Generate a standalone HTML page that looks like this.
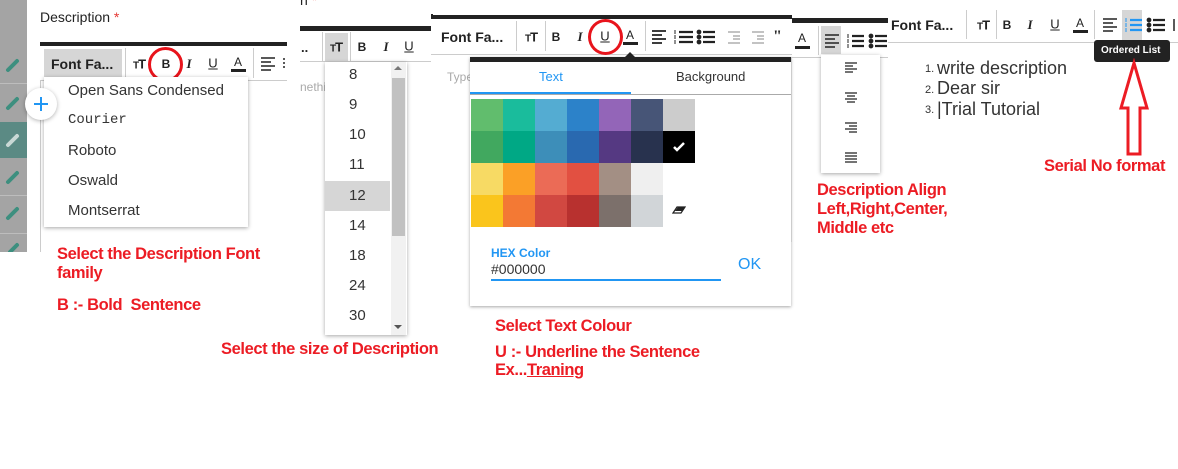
<!DOCTYPE html>
<html><head><meta charset="utf-8"><style>
*{margin:0;padding:0;box-sizing:border-box}
body{width:1178px;height:469px;background:#fff;position:relative;overflow:hidden;font-family:"Liberation Sans",Arial,sans-serif;color:#222}
.a{position:absolute}
.t{position:absolute;white-space:nowrap}
.red{color:#ec1c24;font-weight:bold;font-size:16.5px;line-height:19px;letter-spacing:-0.4px;position:absolute;white-space:nowrap}
.bar{position:absolute;background:#222}
.hl{position:absolute;height:1px;background:#ccc}
.sep{position:absolute;width:1px;background:#ccc}
.ic{position:absolute;font-weight:bold;font-size:13px;color:#222;transform:translate(-50%,-50%)}
.tt{position:absolute;font-weight:bold;font-size:13px;transform:translate(-50%,-50%);letter-spacing:-1px}
.tt small{font-size:10px}
.sw{position:absolute;width:32px;height:32px}
.item{position:absolute;left:68px;font-size:15px;color:#333}
.sz{position:absolute;left:349px;font-size:15px;color:#333}
</style></head><body>

<!-- left gray strip -->
<div class="a" style="left:0;top:0;width:27px;height:252px;background:#a4a4a4"></div>
<div class="a" style="left:0;top:122px;width:27px;height:36px;background:#5b8a84"></div>
<div class="hl" style="left:0;top:83px;width:27px;background:#bdbdbd"></div>
<div class="hl" style="left:0;top:195px;width:27px;background:#bdbdbd"></div>
<div class="hl" style="left:0;top:233px;width:27px;background:#bdbdbd"></div>
<svg class="a" style="left:0;top:0" width="27" height="252">
<g stroke-linecap="round" stroke-width="4">
<path d="M8 70 L17 61" stroke="#3d8f7f"/><path d="M8 108 L17 99" stroke="#3d8f7f"/>
<path d="M8 145 L17 136" stroke="#c9d8d5"/><path d="M8 182 L17 173" stroke="#3d8f7f"/>
<path d="M8 218 L17 209" stroke="#3d8f7f"/><path d="M10 252 L17 245" stroke="#3d8f7f"/>
</g></svg>
<div class="a" style="left:40px;top:80px;width:1px;height:172px;background:#ccc"></div>

<!-- panel 1 -->
<div class="t" style="left:40px;top:9px;font-size:14px;color:#222">Description <span style="color:#e53935">*</span></div>
<div class="bar" style="left:40px;top:42px;width:247px;height:4px"></div>
<div class="hl" style="left:40px;top:80px;width:247px"></div>
<div class="a" style="left:44px;top:49px;width:78px;height:28px;background:#d6d6d6"></div>
<div class="t" style="left:51px;top:56px;font-size:14px;font-weight:bold;color:#222">Font Fa...</div>
<div class="sep" style="left:125px;top:48px;height:30px"></div>
<div class="tt" style="left:139px;top:64px"><small>T</small>T</div>
<div class="ic" style="left:166px;top:64px;font-size:12px">B</div>
<div class="ic" style="left:189px;top:64px;font-style:italic;font-family:'Liberation Serif'">I</div>
<div class="ic" style="left:213px;top:63px;font-weight:normal;text-decoration:underline">U</div>
<div class="ic" style="left:238px;top:62px;font-weight:normal;font-size:12px">A</div>
<div class="a" style="left:231px;top:69px;width:15px;height:3px;background:#222"></div>
<div class="sep" style="left:253px;top:48px;height:30px"></div>
<svg class="a" style="left:260px;top:56px" width="30" height="16"><g stroke="#222" stroke-width="1.5"><path d="M1 2h14M1 6h10M1 10h14M1 14h10"/><path d="M24 2v12" stroke-dasharray="2 2"/></g></svg>
<div class="a" style="left:148px;top:47px;width:35px;height:35px;border:3px solid #e8141c;border-radius:50%"></div>
<!-- font dropdown -->
<div class="a" style="left:44px;top:77px;width:204px;height:150px;background:#fff;box-shadow:0 1px 4px rgba(0,0,0,.35)"></div>
<div class="item" style="top:82px">Open Sans Condensed</div>
<div class="item" style="top:112px;font-family:'Liberation Mono';font-size:14px">Courier</div>
<div class="item" style="top:142px">Roboto</div>
<div class="item" style="top:172px">Oswald</div>
<div class="item" style="top:202px">Montserrat</div>
<div class="a" style="left:25px;top:88px;width:32px;height:32px;border-radius:50%;background:#fff;box-shadow:0 1px 4px rgba(0,0,0,.3)"></div>
<div class="a" style="left:34px;top:103px;width:14px;height:2px;background:#2196f3"></div>
<div class="a" style="left:40px;top:97px;width:2px;height:14px;background:#2196f3"></div>

<!-- panel 2 -->
<div class="t" style="left:300px;top:-8px;font-size:14px">n <span style="color:#e53935">*</span></div>
<div class="bar" style="left:300px;top:26px;width:131px;height:5px"></div>
<div class="bar" style="left:431px;top:14px;width:2px;height:5px"></div>
<div class="hl" style="left:300px;top:61px;width:131px"></div>
<div class="t" style="left:301px;top:40px;font-weight:bold;font-size:13px">..</div>
<div class="sep" style="left:322px;top:32px;height:29px"></div>
<div class="a" style="left:325px;top:33px;width:23px;height:28px;background:#d6d6d6"></div>
<div class="tt" style="left:336px;top:47px"><small>T</small>T</div>
<div class="sep" style="left:350px;top:32px;height:29px"></div>
<div class="ic" style="left:362px;top:47px;font-size:12px">B</div>
<div class="ic" style="left:386px;top:47px;font-style:italic;font-family:'Liberation Serif'">I</div>
<div class="ic" style="left:409px;top:46px;font-weight:normal;text-decoration:underline">U</div>
<div class="t" style="left:300px;top:80px;font-size:12px;color:#aaa">nethi</div>
<div class="t" style="left:447px;top:70px;font-size:12px;color:#aaa">Type</div>
<!-- size dropdown -->
<div class="a" style="left:325px;top:62px;width:82px;height:273px;background:#fff;box-shadow:0 1px 4px rgba(0,0,0,.35)"></div>
<div class="a" style="left:325px;top:181px;width:65px;height:30px;background:#d6d6d6"></div>
<div class="a" style="left:391px;top:62px;width:15px;height:273px;background:#f1f1f1"></div>
<div class="a" style="left:392px;top:78px;width:13px;height:158px;background:#c1c1c1"></div>
<div class="a" style="left:394px;top:66px;border:4px solid transparent;border-bottom:4px solid #777;border-top:0"></div>
<div class="a" style="left:394px;top:325px;border:4px solid transparent;border-top:4px solid #555;border-bottom:0"></div>
<div class="sz" style="top:66px">8</div><div class="sz" style="top:96px">9</div>
<div class="sz" style="top:126px">10</div><div class="sz" style="top:156px">11</div>
<div class="sz" style="top:187px">12</div><div class="sz" style="top:217px">14</div>
<div class="sz" style="top:247px">18</div><div class="sz" style="top:277px">24</div>
<div class="sz" style="top:307px">30</div>

<!-- panel 3 -->
<div class="a" style="left:431px;top:19px;width:361px;height:36px;background:#fff"></div>
<div class="bar" style="left:431px;top:15px;width:361px;height:4px"></div>
<div class="hl" style="left:431px;top:54px;width:361px"></div>
<div class="t" style="left:441px;top:29px;font-size:14px;font-weight:bold">Font Fa...</div>
<div class="sep" style="left:516px;top:21px;height:30px"></div>
<div class="tt" style="left:531px;top:37px"><small>T</small>T</div>
<div class="sep" style="left:545px;top:21px;height:30px"></div>
<div class="ic" style="left:556px;top:37px;font-size:12px">B</div>
<div class="ic" style="left:580px;top:37px;font-style:italic;font-family:'Liberation Serif'">I</div>
<div class="ic" style="left:605px;top:36px;font-weight:normal;text-decoration:underline">U</div>
<div class="ic" style="left:630px;top:35px;font-weight:normal;font-size:12px">A</div>
<div class="a" style="left:623px;top:42px;width:15px;height:3px;background:#222"></div>
<div class="sep" style="left:645px;top:21px;height:30px"></div>
<svg class="a" style="left:650px;top:29px" width="140" height="16"><g stroke="#222" stroke-width="1.8" fill="#222">
<path d="M2 2h14M2 6h10M2 10h14M2 14h10" fill="none"/>
<path d="M29 3h14M29 8h14M29 13h14" fill="none" stroke-width="2.2"/><path d="M25 1v4M25 6v4M25 11v4" stroke-width="1"/>
<circle cx="49" cy="3" r="1.5"/><circle cx="49" cy="8" r="1.5"/><circle cx="49" cy="13" r="1.5"/><path d="M53 3h12M53 8h12M53 13h12" fill="none" stroke-width="2.2"/>
<g stroke="#bbb" fill="none"><path d="M78 3h12M83 7h7M83 10h7M78 14h12"/><path d="M102 3h12M107 7h7M107 10h7M102 14h12"/></g>
</g></svg>
<div class="t" style="left:773px;top:28px;font-size:16px;font-weight:bold;font-family:'Liberation Serif'">"</div>
<div class="a" style="left:588px;top:19px;width:35px;height:36px;border:3px solid #e8141c;border-radius:50%"></div>
<!-- color popup -->
<div class="a" style="left:470px;top:57px;width:321px;height:249px;background:#fff;box-shadow:0 1px 3px rgba(0,0,0,.35)"></div>
<div class="a" style="left:625px;top:52px;border:5px solid transparent;border-bottom:5px solid #222;border-top:0"></div>
<div class="bar" style="left:470px;top:57px;width:321px;height:5px"></div>
<div class="t" style="left:539px;top:69px;font-size:13px;color:#2196f3">Text</div>
<div class="t" style="left:676px;top:69px;font-size:13px;color:#333">Background</div>
<div class="a" style="left:470px;top:92px;width:161px;height:2px;background:#2196f3"></div>
<div class="hl" style="left:470px;top:94px;width:321px;background:#aaa"></div>
<div class="sw" style="left:471px;top:99px;background:#61bd6d"></div><div class="sw" style="left:503px;top:99px;background:#1abc9c"></div><div class="sw" style="left:535px;top:99px;background:#54acd2"></div><div class="sw" style="left:567px;top:99px;background:#2c82c9"></div><div class="sw" style="left:599px;top:99px;background:#9365b8"></div><div class="sw" style="left:631px;top:99px;background:#475577"></div><div class="sw" style="left:663px;top:99px;background:#cccccc"></div>
<div class="sw" style="left:471px;top:131px;background:#41a85f"></div><div class="sw" style="left:503px;top:131px;background:#00a885"></div><div class="sw" style="left:535px;top:131px;background:#3d8eb9"></div><div class="sw" style="left:567px;top:131px;background:#2969b0"></div><div class="sw" style="left:599px;top:131px;background:#553982"></div><div class="sw" style="left:631px;top:131px;background:#28324e"></div><div class="sw" style="left:663px;top:131px;background:#000"></div>
<div class="sw" style="left:471px;top:163px;background:#f7da64"></div><div class="sw" style="left:503px;top:163px;background:#fba026"></div><div class="sw" style="left:535px;top:163px;background:#eb6b56"></div><div class="sw" style="left:567px;top:163px;background:#e25041"></div><div class="sw" style="left:599px;top:163px;background:#a38f84"></div><div class="sw" style="left:631px;top:163px;background:#efefef"></div>
<div class="sw" style="left:471px;top:195px;background:#fac51c"></div><div class="sw" style="left:503px;top:195px;background:#f37934"></div><div class="sw" style="left:535px;top:195px;background:#d14841"></div><div class="sw" style="left:567px;top:195px;background:#b8312f"></div><div class="sw" style="left:599px;top:195px;background:#7c706b"></div><div class="sw" style="left:631px;top:195px;background:#d1d5d8"></div>
<svg class="a" style="left:671px;top:139px" width="16" height="16"><path d="M3 8l3 3 7-7" stroke="#fff" stroke-width="2.5" fill="none"/></svg>
<svg class="a" style="left:672px;top:205px" width="14" height="10"><path d="M1 8l4-6h8l-4 6z" fill="#fff" stroke="#222" stroke-width="1.2"/><path d="M3 6l3-4h7l-3 4z" fill="#222"/></svg>
<div class="t" style="left:491px;top:246px;font-size:12px;font-weight:bold;color:#2196f3">HEX Color</div>
<div class="t" style="left:491px;top:261px;font-size:14px;color:#333">#000000</div>
<div class="a" style="left:491px;top:279px;width:230px;height:2px;background:#2196f3"></div>
<div class="t" style="left:738px;top:256px;font-size:16px;color:#2196f3">OK</div>

<!-- panel 4 -->
<div class="a" style="left:791px;top:57px;width:1px;height:185px;background:#ccc"></div>
<div class="bar" style="left:792px;top:18px;width:96px;height:5px"></div>
<div class="hl" style="left:792px;top:57px;width:96px"></div>
<div class="ic" style="left:802px;top:38px;font-weight:normal;font-size:12px">A</div>
<div class="a" style="left:795px;top:46px;width:15px;height:3px;background:#222"></div>
<div class="sep" style="left:818px;top:26px;height:29px"></div>
<div class="a" style="left:821px;top:26px;width:20px;height:28px;background:#d6d6d6"></div>
<svg class="a" style="left:823px;top:33px" width="66" height="16"><g stroke="#222" stroke-width="1.8" fill="#222">
<path d="M2 2h14M2 6h10M2 10h14M2 14h10" fill="none" stroke-width="1.5"/>
<path d="M29 3h12M29 8h12M29 13h12" fill="none" stroke-width="2.2"/><path d="M25 1v4M25 6v4M25 11v4" stroke-width="1"/>
<circle cx="48" cy="3" r="1.5"/><circle cx="48" cy="8" r="1.5"/><circle cx="48" cy="13" r="1.5"/><path d="M52 3h12M52 8h12M52 13h12" fill="none" stroke-width="2.2"/>
</g></svg>
<div class="a" style="left:821px;top:55px;width:59px;height:118px;background:#fff;box-shadow:0 1px 4px rgba(0,0,0,.35)"></div>
<svg class="a" style="left:844px;top:62px" width="14" height="104"><g stroke="#222" stroke-width="1.3" fill="none">
<path d="M1 1h12M1 4h8M1 7h12M1 10h8"/>
<path d="M1 31h12M3 34h8M1 37h12M3 40h8"/>
<path d="M1 61h12M5 64h8M1 67h12M5 70h8"/>
<path d="M1 91h12M1 94h12M1 97h12M1 100h12"/></g></svg>
<div class="red" style="left:817px;top:181px">Description Align</div>
<div class="red" style="left:817px;top:200px">Left,Right,Center,</div>
<div class="red" style="left:817px;top:219px">Middle etc</div>

<!-- panel 5 -->
<div class="hl" style="left:888px;top:42px;width:290px"></div>
<div class="t" style="left:891px;top:17px;font-size:14px;font-weight:bold">Font Fa...</div>
<div class="sep" style="left:966px;top:10px;height:29px"></div>
<div class="tt" style="left:983px;top:25px"><small>T</small>T</div>
<div class="sep" style="left:996px;top:10px;height:29px"></div>
<div class="ic" style="left:1007px;top:25px;font-size:12px">B</div>
<div class="ic" style="left:1030px;top:25px;font-style:italic;font-family:'Liberation Serif'">I</div>
<div class="ic" style="left:1055px;top:24px;font-weight:normal;text-decoration:underline">U</div>
<div class="ic" style="left:1080px;top:23px;font-weight:normal;font-size:12px">A</div>
<div class="a" style="left:1073px;top:30px;width:15px;height:3px;background:#222"></div>
<div class="sep" style="left:1094px;top:10px;height:29px"></div>
<div class="a" style="left:1122px;top:10px;width:20px;height:30px;background:#d6d6d6"></div>
<svg class="a" style="left:1102px;top:17px" width="76" height="16"><g stroke="#222" stroke-width="1.8" fill="#222">
<path d="M1 2h14M1 6h10M1 10h14M1 14h10" fill="none" stroke-width="1.5"/>
<g stroke="#2196f3" fill="#2196f3"><path d="M28 3h12M28 8h12M28 13h12" fill="none" stroke-width="2.2"/><path d="M24 1v4M24 6v4M24 11v4" stroke-width="1"/></g>
<circle cx="47" cy="3" r="1.5"/><circle cx="47" cy="8" r="1.5"/><circle cx="47" cy="13" r="1.5"/><path d="M51 3h12M51 8h12M51 13h12" fill="none" stroke-width="2.2"/>
<path d="M72 2v12" fill="none" stroke-width="1.5"/></g></svg>
<div class="a" style="left:1094px;top:40px;width:76px;height:22px;background:#222;border-radius:3px"></div>
<div class="t" style="left:1101px;top:45px;font-size:10px;font-weight:bold;color:#fff">Ordered List</div>
<div class="t" style="left:925px;top:63px;font-size:11px;color:#333">1.</div>
<div class="t" style="left:925px;top:84px;font-size:11px;color:#333">2.</div>
<div class="t" style="left:925px;top:104px;font-size:11px;color:#333">3.</div>
<div class="t" style="left:937px;top:58px;font-size:18px;color:#333">write description</div>
<div class="t" style="left:937px;top:78px;font-size:18px;color:#333">Dear sir</div>
<div class="t" style="left:937px;top:99px;font-size:18px;color:#333">|Trial Tutorial</div>
<svg class="a" style="left:1115px;top:58px" width="40" height="100"><path d="M19 5 L32 50 L25 50 L25 96 L13 96 L13 50 L6 50 Z" fill="none" stroke="#ec1c24" stroke-width="3"/></svg>
<div class="red" style="left:1044px;top:157px">Serial No format</div>

<!-- annotations -->
<div class="red" style="left:57px;top:245px">Select the Description Font</div>
<div class="red" style="left:57px;top:264px">family</div>
<div class="red" style="left:57px;top:296px">B :- Bold &nbsp;Sentence</div>
<div class="red" style="left:221px;top:340px">Select the size of Description</div>
<div class="red" style="left:495px;top:317px">Select Text Colour</div>
<div class="red" style="left:495px;top:343px">U :- Underline the Sentence</div>
<div class="red" style="left:495px;top:361px">Ex...<span style="text-decoration:underline">Traning</span></div>
</body></html>
